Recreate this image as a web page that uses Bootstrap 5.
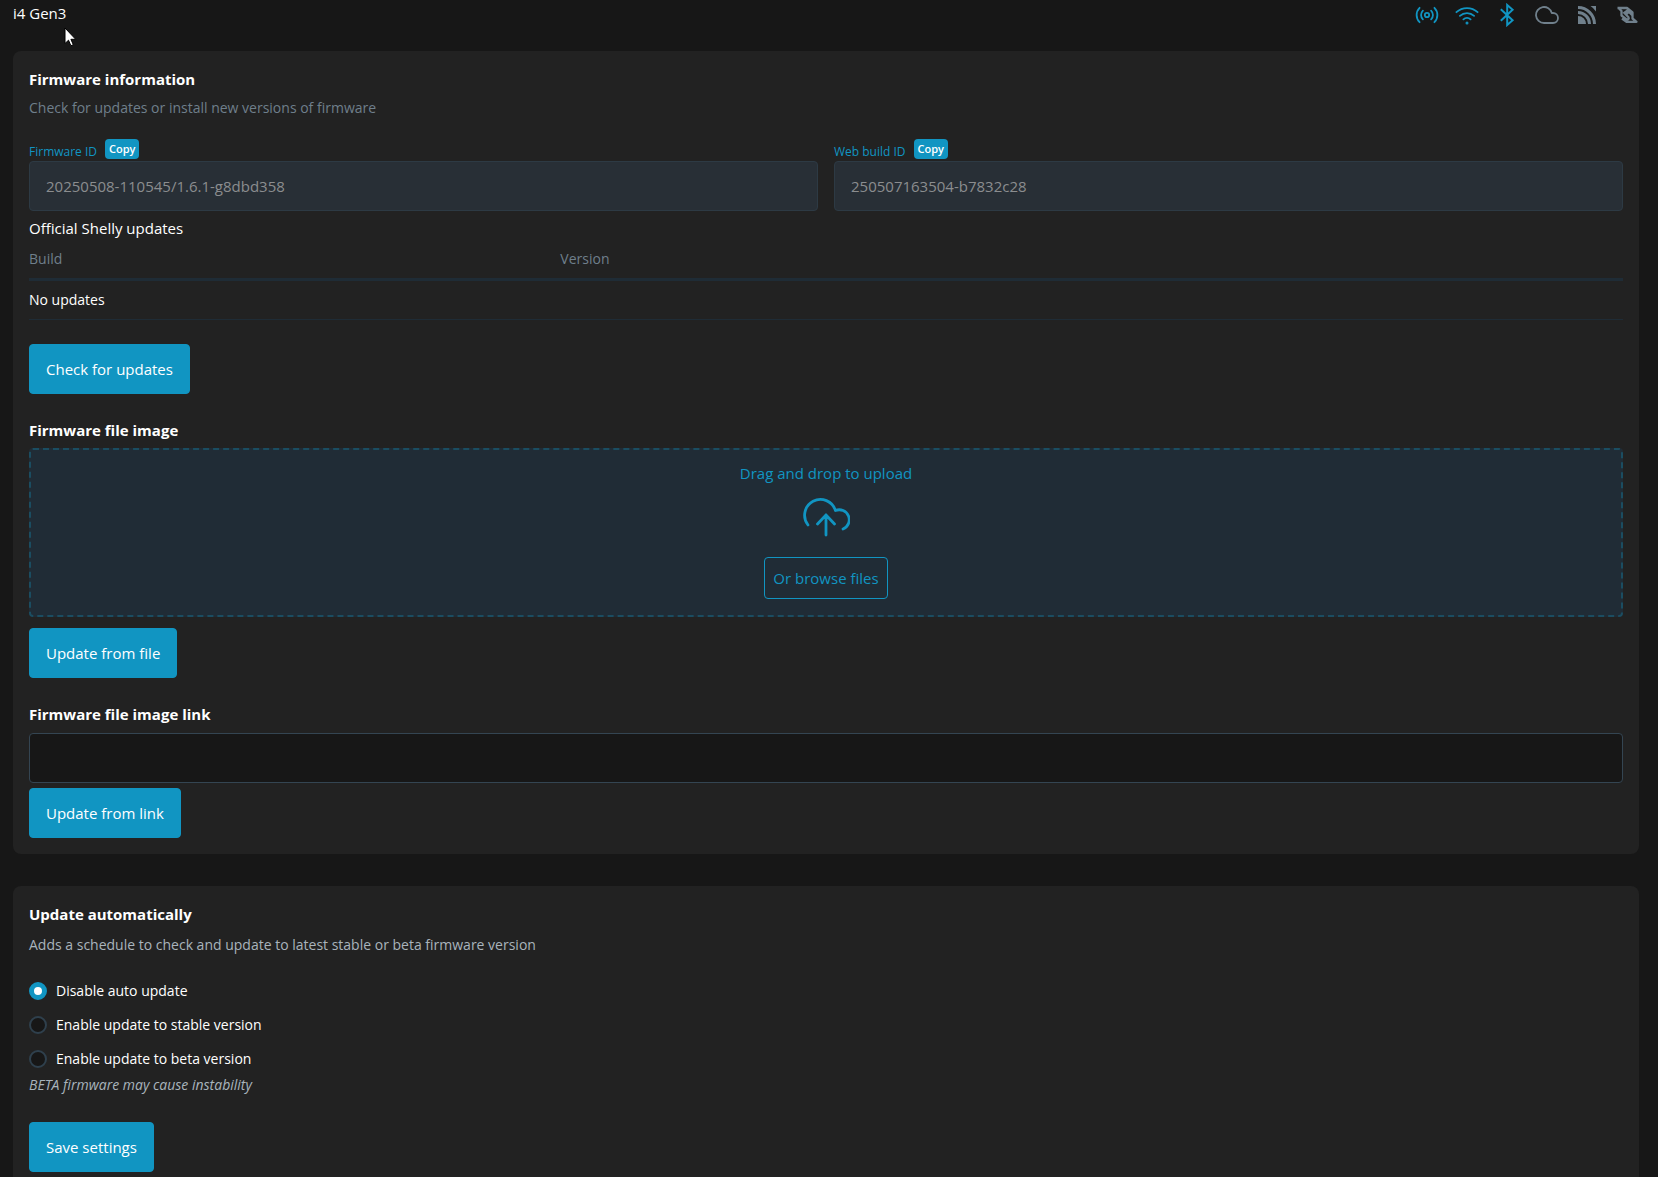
<!DOCTYPE html>
<html lang="en" data-bs-theme="dark">
<head>
<meta charset="utf-8">
<meta name="viewport" content="width=device-width, initial-scale=1">
<title>i4 Gen3 – Firmware</title>
<link href="https://cdn.jsdelivr.net/npm/bootstrap@5.3.0/dist/css/bootstrap.min.css" rel="stylesheet">
<style>
:root { --accent: #1195c2; --dim: #6f7f8b; }
html { scrollbar-width: none; }
body { background: #171717; color: #fff; font-family: "Open Sans", "Noto Sans", sans-serif; font-size: 15px; line-height: 24px; }
.page { padding: 3px 19px 0 13px; }
.topbar { margin-bottom: 24px; }
.device-name { line-height: 20px; }
.status-icons { gap: 16px; color: var(--accent); }
.status-icons svg { width: 24px; height: 24px; display: block; }
.status-icons .off { color: #70808c; }
.pointer { position: absolute; left: 64px; top: 27px; width: 13px; height: 20px; }
.panel { background: #222; border-radius: 8px; padding: 16px; margin-bottom: 32px; }
.panel-title { font-size: 15px; line-height: 24px; font-weight: 700; margin: 0; display: block; }
.section-title { margin: 24px 0 6px; }
.link-title { margin-bottom: 7px; }
.hint { font-size: 14px; line-height: 20px; color: var(--dim); margin: 7px 0 21px; }
.hint-auto { color: #a9b4bc; margin: 9px 0 19px; }
.id-row { margin-bottom: 2px; }
.id-label { font-size: 12px; line-height: 25px; height: 20px; color: var(--accent); }
.btn-copy { background: var(--accent); color: #fff; font-size: 11px; line-height: 20px; padding: 0 4px; border: 0; border-radius: 4px; margin-left: 8px; font-weight: 600; }
.field { height: 50px; border-radius: 4px; border-color: #344552; background: #171717; font-size: 15px; padding: 0 16px; color: #fff; }
.field:disabled { background: #282f36; border-color: #2d3a44; color: #8b8d8f; }
.updates-heading { margin-top: 5px; }
.updates-table { table-layout: fixed; width: 100%; font-size: 14px; line-height: 20px; margin: 1px 0 0; }
.updates-table th { font-weight: 400; color: var(--dim); padding: 8px 0 9px; border-bottom: 3px solid #1f2c36; }
.updates-table td { padding: 9px 0; border-bottom: 1px solid #1f2c36; }
.btn-main { background: var(--accent); color: #fff; height: 50px; padding: 0 16px; border: 1px solid var(--accent); border-radius: 4px; font-size: 15px; }
.btn-main:hover, .btn-copy:hover { background: #0e84ac; color: #fff; }
.after-drop { margin-top: 11px; }
.after-link { margin-top: 5px; }
.btn-save { margin-top: 28px; }
.dropzone { background: #202c36; border: 2px dashed #1b4d61; border-radius: 4px; padding: 11px 16px 16px; color: var(--accent); }
.dropzone svg { width: 48px; height: 47px; margin: 8px 0 17px; }
.btn-browse { border: 1px solid var(--accent); color: var(--accent); height: 42px; border-radius: 4px; padding: 0 8px; font-size: 15px; }
.option { height: 34px; font-size: 14px; gap: 9px; padding: 0; margin: 0; min-height: 0; }
.option .form-check-input { width: 18px; height: 18px; margin: 0; float: none; background-color: #171717; border: 2px solid #2f404d; }
.option .form-check-input:checked { background: #fff; border: 5px solid var(--accent); }
.note { font-size: 14px; line-height: 18px; color: #a9b4bc; }
</style>
</head>
<body>
<div class="page">
  <header class="topbar d-flex justify-content-between align-items-start">
    <span class="device-name">i4 Gen3</span>
    <div class="status-icons d-flex">
      <svg viewBox="0 0 24 24" fill="none" stroke="currentColor" stroke-width="1.8" stroke-linecap="round"><circle cx="12" cy="12" r="2.2"/><path d="M7.900 7.600a6.200 6.200 0 0 0 0 8.800M16.100 7.600a6.200 6.200 0 0 1 0 8.800M4.600 4.800a10.200 10.200 0 0 0 0 14.400M19.400 4.800a10.200 10.200 0 0 1 0 14.400"/></svg>
      <svg viewBox="0 0 24 24" fill="none" stroke="currentColor" stroke-width="1.8" stroke-linecap="round"><path d="M1.400 9.200a15.600 15.600 0 0 1 21.200 0M4.900 12.900a10.400 10.400 0 0 1 14.200 0M8.400 16.400a5.400 5.400 0 0 1 7.200 0"/><circle cx="12" cy="20" r=".6" fill="currentColor"/></svg>
      <svg viewBox="0 0 24 24" fill="none" stroke="currentColor" stroke-width="2"><path d="M5.800 6.200 17.600 17.200 12.200 22V2l5.400 4.800L5.800 17.800"/></svg>
      <svg class="off" viewBox="0 0 24 24" fill="none" stroke="currentColor" stroke-width="1.8" stroke-linejoin="round"><path d="M18 10h-1.260A8 8 0 1 0 9 20h9a5 5 0 0 0 0-10z"/></svg>
      <svg class="off" viewBox="0 0 24 24"><path fill="currentColor" d="M3 13a8 8 0 0 1 8 8H3zM15.500 3H21v5.500A20 20 0 0 0 15.500 3z"/><path fill="none" stroke="currentColor" stroke-width="3" d="M3 9.500A11.500 11.500 0 0 1 14.500 21M3 4.500A16.500 16.500 0 0 1 19.500 21"/></svg>
      <svg class="off" viewBox="0 0 24 24" fill="none" stroke="currentColor" stroke-width="2.300" stroke-linejoin="round"><path d="M2.500 5h9.500l5.500 4.500v6l4 3.300H11.500L7 15.500M3.500 5l3 3v4.500l5 3.800c1.500.6 2.800-.6 2-2l-5-5.300M10 9.500l2.500-2 5 5M10.500 12l3.500-3"/></svg>
    </div>
  </header>

  <main>
    <section class="panel">
      <h1 class="panel-title">Firmware information</h1>
      <p class="hint">Check for updates or install new versions of firmware</p>
      <div class="row gx-3">
        <div class="col-6">
          <div class="id-row d-flex"><label class="id-label" for="fwId">Firmware ID</label><button type="button" class="btn-copy">Copy</button></div>
          <input id="fwId" class="form-control field" type="text" value="20250508-110545/1.6.1-g8dbd358" disabled>
        </div>
        <div class="col-6">
          <div class="id-row d-flex"><label class="id-label" for="webId">Web build ID</label><button type="button" class="btn-copy">Copy</button></div>
          <input id="webId" class="form-control field" type="text" value="250507163504-b7832c28" disabled>
        </div>
      </div>
      <div class="updates-heading">Official Shelly updates</div>
      <table class="updates-table">
        <thead><tr><th scope="col">Build</th><th scope="col">Version</th><th></th></tr></thead>
        <tbody><tr><td colspan="3">No updates</td></tr></tbody>
      </table>
      <button type="button" class="btn btn-main mt-4">Check for updates</button>

      <h2 class="panel-title section-title">Firmware file image</h2>
      <div class="dropzone d-flex flex-column align-items-center">
        <span>Drag and drop to upload</span>
        <svg viewBox="0 0 48 47" fill="none" stroke="currentColor" stroke-width="2.800" stroke-linecap="round" stroke-linejoin="round"><path d="M6 32A15.800 15.800 0 1 1 33.500 17.500a9.800 9.800 0 0 1 7.500 18.500M24 42V22M15.500 31 24 22l8.500 9"/></svg>
        <button type="button" class="btn btn-browse">Or browse files</button>
      </div>
      <button type="button" class="btn btn-main after-drop">Update from file</button>

      <label class="panel-title section-title link-title" for="fwLink">Firmware file image link</label>
      <input id="fwLink" class="form-control field" type="text">
      <button type="button" class="btn btn-main after-link">Update from link</button>
    </section>

    <section class="panel">
      <h2 class="panel-title">Update automatically</h2>
      <p class="hint hint-auto">Adds a schedule to check and update to latest stable or beta firmware version</p>
      <div class="form-check option d-flex align-items-center"><input class="form-check-input" type="radio" name="auto" id="autoOff" checked><label for="autoOff">Disable auto update</label></div>
      <div class="form-check option d-flex align-items-center"><input class="form-check-input" type="radio" name="auto" id="autoStable"><label for="autoStable">Enable update to stable version</label></div>
      <div class="form-check option d-flex align-items-center"><input class="form-check-input" type="radio" name="auto" id="autoBeta"><label for="autoBeta">Enable update to beta version</label></div>
      <em class="note d-block">BETA firmware may cause instability</em>
      <button type="button" class="btn btn-main btn-save">Save settings</button>
    </section>
  </main>
</div>
<svg class="pointer" viewBox="0 0 13 20" aria-hidden="true"><path d="M1 1v15.500l3.500-3.300 2.400 5.500 2.400-1-2.400-5.400h4.800z" fill="#fff" stroke="#000" stroke-width="1"/></svg>
<script src="https://cdn.jsdelivr.net/npm/bootstrap@5.3.0/dist/js/bootstrap.bundle.min.js"></script>
</body>
</html>
